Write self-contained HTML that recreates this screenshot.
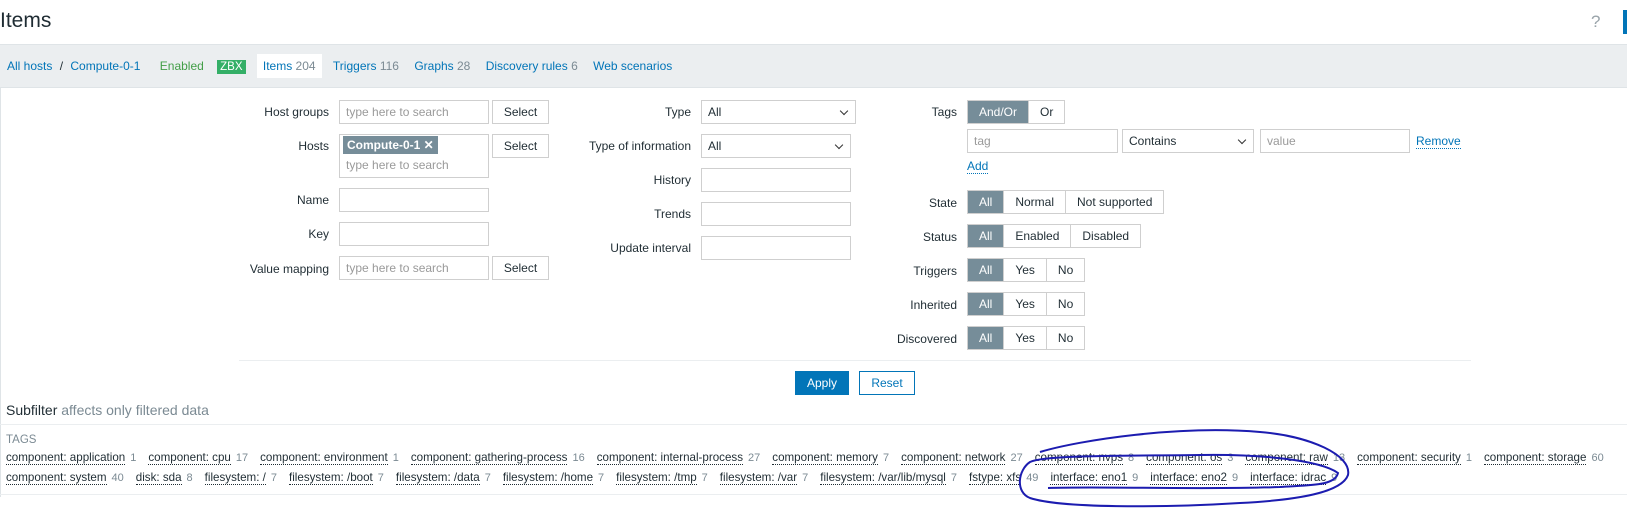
<!DOCTYPE html>
<html><head><style>
body{margin:0;width:1627px;height:521px;overflow:hidden;background:#fff;font-family:"Liberation Sans",Arial,sans-serif;font-size:12px;color:#1f2c33;position:relative}
.a{position:absolute}
.lbl{position:absolute;text-align:right;white-space:nowrap}
.inp{position:absolute;border:1px solid #cfcfcf;background:#fff;box-sizing:border-box;height:24px;color:#9a9a9a;padding:4px 6px;white-space:nowrap}
.btn{position:absolute;border:1px solid #cfcfcf;background:#fff;box-sizing:border-box;height:24px;text-align:center;line-height:22px;color:#1f2c33}
.seg{position:absolute;display:flex;height:24px;border:1px solid #cfcfcf;box-sizing:border-box}
.seg span{padding:0 11px;line-height:22px;border-left:1px solid #cfcfcf}
.seg span:first-child{border-left:none}
.seg .on{background:#768d99;color:#fff}
.link{color:#0275b8}
.tags{position:absolute;left:6px;white-space:nowrap;font-size:11.6px}
.tags span{border-bottom:1px dotted #1f2c33}
.tags i{font-style:normal;color:#7b8a93;margin:0 12px 0 5px;font-size:11px}
.sel::after{content:"";position:absolute;right:8px;top:7px;width:5px;height:5px;border-right:1.5px solid #333;border-bottom:1.5px solid #333;transform:rotate(45deg)}
</style></head><body>
<div class="a" style="left:0;top:9px;font-size:21px;color:#1f2c33">Items</div>
<div class="a" style="left:1591px;top:12px;font-size:17px;color:#9aa4aa">?</div>
<div class="a" style="left:1623px;top:10px;width:4px;height:24px;background:#0275b8"></div>
<div class="a" style="left:0;top:44px;width:1627px;height:42px;background:#ebeef0;border-top:1px solid #dfe4e7;border-bottom:1px solid #dfe4e7"></div>
<div class="a" style="left:7px;top:59px;white-space:nowrap">
<span class="link">All hosts</span> <span style="color:#1f2c33;margin:0 4px">/</span> <span class="link">Compute-0-1</span>
<span style="color:#429e47;margin-left:16px">Enabled</span>
<span style="background:#34af67;color:#fff;padding:1px 3px;margin-left:10px;font-size:11.5px">ZBX</span>
<span style="background:#fff;padding:5px 6px;margin-left:8px;color:#0275b8">Items <span style="color:#7b8a93">204</span></span>
<span class="link" style="margin-left:8px">Triggers <span style="color:#7b8a93">116</span></span>
<span class="link" style="margin-left:12px">Graphs <span style="color:#7b8a93">28</span></span>
<span class="link" style="margin-left:12px">Discovery rules <span style="color:#7b8a93">6</span></span>
<span class="link" style="margin-left:12px">Web scenarios</span>
</div>
<div class="a" style="left:0;top:87px;width:1px;height:410px;background:#dfe4e7"></div>

<div class="lbl" style="right:1298px;top:105px">Host groups</div>
<div class="inp" style="left:339px;top:100px;width:150px">type here to search</div>
<div class="btn" style="left:492px;top:100px;width:57px">Select</div>
<div class="lbl" style="right:1298px;top:139px">Hosts</div>
<div class="inp" style="left:339px;top:134px;width:150px;height:44px;padding:3px"><span style="background:#768d99;color:#fff;padding:2px 4px;font-weight:bold">Compute-0-1 ✕</span><div style="margin-top:6px;padding-left:3px">type here to search</div></div>
<div class="btn" style="left:492px;top:134px;width:57px">Select</div>
<div class="lbl" style="right:1298px;top:193px">Name</div>
<div class="inp" style="left:339px;top:188px;width:150px"></div>
<div class="lbl" style="right:1298px;top:227px">Key</div>
<div class="inp" style="left:339px;top:222px;width:150px"></div>
<div class="lbl" style="right:1298px;top:262px">Value mapping</div>
<div class="inp" style="left:339px;top:256px;width:150px">type here to search</div>
<div class="btn" style="left:492px;top:256px;width:57px">Select</div>

<div class="lbl" style="right:936px;top:105px">Type</div>
<div class="inp sel" style="left:701px;top:100px;width:155px;color:#1f2c33">All</div>
<div class="lbl" style="right:936px;top:139px">Type of information</div>
<div class="inp sel" style="left:701px;top:134px;width:150px;color:#1f2c33">All</div>
<div class="lbl" style="right:936px;top:173px">History</div>
<div class="inp" style="left:701px;top:168px;width:150px"></div>
<div class="lbl" style="right:936px;top:207px">Trends</div>
<div class="inp" style="left:701px;top:202px;width:150px"></div>
<div class="lbl" style="right:936px;top:241px">Update interval</div>
<div class="inp" style="left:701px;top:236px;width:150px"></div>

<div class="lbl" style="right:670px;top:105px">Tags</div>
<div class="seg" style="left:967px;top:100px"><span class="on">And/Or</span><span>Or</span></div>
<div class="inp" style="left:967px;top:129px;width:151px">tag</div>
<div class="inp sel" style="left:1122px;top:129px;width:132px;color:#1f2c33">Contains</div>
<div class="inp" style="left:1260px;top:129px;width:150px">value</div>
<div class="a link" style="left:1416px;top:134px;border-bottom:1px dotted #0275b8">Remove</div>
<div class="a link" style="left:967px;top:159px;border-bottom:1px dotted #0275b8">Add</div>
<div class="lbl" style="right:670px;top:196px">State</div>
<div class="seg" style="left:967px;top:190px"><span class="on">All</span><span>Normal</span><span>Not supported</span></div>
<div class="lbl" style="right:670px;top:230px">Status</div>
<div class="seg" style="left:967px;top:224px"><span class="on">All</span><span>Enabled</span><span>Disabled</span></div>
<div class="lbl" style="right:670px;top:264px">Triggers</div>
<div class="seg" style="left:967px;top:258px"><span class="on">All</span><span>Yes</span><span>No</span></div>
<div class="lbl" style="right:670px;top:298px">Inherited</div>
<div class="seg" style="left:967px;top:292px"><span class="on">All</span><span>Yes</span><span>No</span></div>
<div class="lbl" style="right:670px;top:332px">Discovered</div>
<div class="seg" style="left:967px;top:326px"><span class="on">All</span><span>Yes</span><span>No</span></div>

<div class="a" style="left:239px;top:360px;width:1232px;height:1px;background:#ebeef0"></div>
<div class="btn" style="left:795px;top:371px;width:54px;background:#0275b8;border-color:#0275b8;color:#fff">Apply</div>
<div class="btn" style="left:859px;top:371px;width:56px;border-color:#0275b8;color:#0275b8">Reset</div>

<div class="a" style="left:6px;top:402px;font-size:14px">Subfilter <span style="color:#7b8a93">affects only filtered data</span></div>
<div class="a" style="left:0;top:424px;width:1627px;height:1px;background:#ebeef0"></div>
<div class="a" style="left:6px;top:434px;font-size:11.5px;color:#7b8a93">TAGS</div>
<div class="tags" style="top:451px">
<span>component: application</span><i>1</i><span>component: cpu</span><i>17</i><span>component: environment</span><i>1</i><span>component: gathering-process</span><i>16</i><span>component: internal-process</span><i>27</i><span>component: memory</span><i>7</i><span>component: network</span><i>27</i><span>component: nvps</span><i>8</i><span>component: os</span><i>3</i><span>component: raw</span><i>13</i><span>component: security</span><i>1</i><span>component: storage</span><i>60</i>
</div>
<div class="tags" style="top:471px">
<span>component: system</span><i>40</i><span>disk: sda</span><i>8</i><span>filesystem: /</span><i>7</i><span>filesystem: /boot</span><i>7</i><span>filesystem: /data</span><i>7</i><span>filesystem: /home</span><i>7</i><span>filesystem: /tmp</span><i>7</i><span>filesystem: /var</span><i>7</i><span>filesystem: /var/lib/mysql</span><i>7</i><span>fstype: xfs</span><i>49</i><span>interface: eno1</span><i>9</i><span>interface: eno2</span><i>9</i><span>interface: idrac</span><i>9</i>
</div>
<div class="a" style="left:0;top:494px;width:1627px;height:1px;background:#ebeef0"></div>

<svg class="a" style="left:0;top:0" width="1627" height="521">
<path d="M1040,452 C1080,440 1180,425 1260,432 C1310,436 1352,455 1348,475 C1342,492 1300,500 1240,503 C1160,508 1060,508 1030,498 C1015,492 1018,470 1030,462 C1045,455 1120,456 1200,455 C1260,454 1320,460 1338,473 C1335,486 1310,485 1280,487 C1200,490 1100,486 1048,488" fill="none" stroke="#1c1cb0" stroke-width="2"/>
</svg>
</body></html>
